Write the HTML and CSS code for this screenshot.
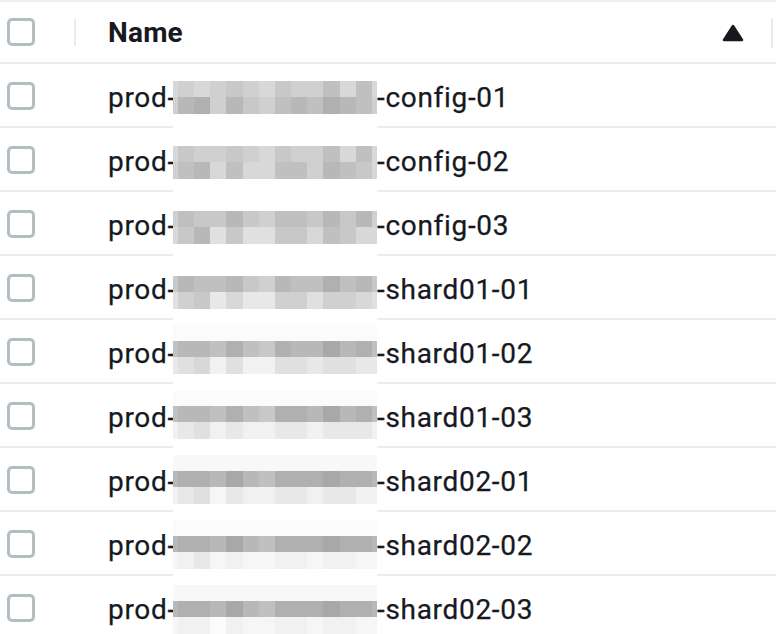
FILE: index.html
```html
<!DOCTYPE html>
<html lang="en">
<head>
<meta charset="utf-8">
<title>Instances</title>
<link rel="stylesheet" href="styles.css">
</head>
<body>
<div class="table">
  <div class="head">
    <div class="cbcell-h"><span class="cb"></span></div>
    <span class="divider"></span>
    <div class="hname">
      <span class="htext">Name</span>
      <svg class="sort" width="22" height="18" viewBox="0 0 22 18"><path d="M11 2 L20 16 H2 Z" fill="#16191f" stroke="#16191f" stroke-width="2.5" stroke-linejoin="round"/></svg>
    </div>
    <span class="divider tall"></span>
  </div>

  <div class="row"><div class="cbcell"><span class="cb"></span></div><div class="name">prod-<span class="gap"></span>-config-01</div></div>
  <div class="row"><div class="cbcell"><span class="cb"></span></div><div class="name">prod-<span class="gap"></span>-config-02</div></div>
  <div class="row"><div class="cbcell"><span class="cb"></span></div><div class="name">prod-<span class="gap"></span>-config-03</div></div>
  <div class="row"><div class="cbcell"><span class="cb"></span></div><div class="name">prod-<span class="gap"></span>-shard01-01</div></div>
  <div class="row"><div class="cbcell"><span class="cb"></span></div><div class="name">prod-<span class="gap"></span>-shard01-02</div></div>
  <div class="row"><div class="cbcell"><span class="cb"></span></div><div class="name">prod-<span class="gap"></span>-shard01-03</div></div>
  <div class="row"><div class="cbcell"><span class="cb"></span></div><div class="name">prod-<span class="gap"></span>-shard02-01</div></div>
  <div class="row"><div class="cbcell"><span class="cb"></span></div><div class="name">prod-<span class="gap"></span>-shard02-02</div></div>
  <div class="row"><div class="cbcell"><span class="cb"></span></div><div class="name">prod-<span class="gap"></span>-shard02-03</div></div>

  <div class="redact" aria-hidden="true">
    <div class="grp">
      <div class="br"></div>
      <div class="br"><i class="g3"></i><i class="g4"></i><i class="g3"></i><i class="g4"></i><i class="g5"></i><i class="g4"></i><i class="g3"></i><i class="g5"></i><i class="g4"></i><i class="g4"></i><i class="g6"></i><i class="g3"></i><i class="g6"></i><i class="g3"></i></div>
      <div class="br"><i class="g4"></i><i class="g7"></i><i class="g8"></i><i class="g4"></i><i class="g7"></i><i class="g5"></i><i class="g4"></i><i class="g6"></i><i class="g7"></i><i class="g6"></i><i class="g8"></i><i class="g7"></i><i class="g6"></i><i class="g4"></i></div>
      <div class="br"></div>
    </div>
    <div class="grp">
      <div class="br"></div>
      <div class="br"><i class="g3"></i><i class="g5"></i><i class="g4"></i><i class="g4"></i><i class="g5"></i><i class="g4"></i><i class="g3"></i><i class="g5"></i><i class="g4"></i><i class="g4"></i><i class="g6"></i><i class="g3"></i><i class="g6"></i><i class="g3"></i></div>
      <div class="br"><i class="g4"></i><i class="g6"></i><i class="g7"></i><i class="g3"></i><i class="g6"></i><i class="g3"></i><i class="g3"></i><i class="g6"></i><i class="g6"></i><i class="g4"></i><i class="g7"></i><i class="g6"></i><i class="g5"></i><i class="g3"></i></div>
      <div class="br"></div>
    </div>
    <div class="grp">
      <div class="br"></div>
      <div class="br"><i class="g4"></i><i class="g6"></i><i class="g5"></i><i class="g5"></i><i class="g7"></i><i class="g5"></i><i class="g4"></i><i class="g6"></i><i class="g6"></i><i class="g5"></i><i class="g7"></i><i class="g5"></i><i class="g7"></i><i class="g4"></i></div>
      <div class="br"><i class="g3"></i><i class="g5"></i><i class="g7"></i><i class="g2"></i><i class="g5"></i><i class="g2"></i><i class="g2"></i><i class="g5"></i><i class="g5"></i><i class="g3"></i><i class="g6"></i><i class="g5"></i><i class="g3"></i><i class="g3"></i></div>
      <div class="br"></div>
    </div>
    <div class="grp">
      <div class="br"></div>
      <div class="br"><i class="g5"></i><i class="g7"></i><i class="g6"></i><i class="g6"></i><i class="g7"></i><i class="g5"></i><i class="g4"></i><i class="g7"></i><i class="g6"></i><i class="g6"></i><i class="g8"></i><i class="g6"></i><i class="g7"></i><i class="g5"></i></div>
      <div class="br"><i class="g2"></i><i class="g4"></i><i class="g5"></i><i class="g1"></i><i class="g3"></i><i class="g1"></i><i class="g1"></i><i class="g4"></i><i class="g4"></i><i class="g2"></i><i class="g4"></i><i class="g4"></i><i class="g3"></i><i class="g2"></i></div>
      <div class="br"></div>
    </div>
    <div class="grp">
      <div class="br f1"></div>
      <div class="br"><i class="g6"></i><i class="g7"></i><i class="g7"></i><i class="g6"></i><i class="g8"></i><i class="g6"></i><i class="g5"></i><i class="g8"></i><i class="g7"></i><i class="g7"></i><i class="g9"></i><i class="g7"></i><i class="g8"></i><i class="g6"></i></div>
      <div class="br"><i class="g1"></i><i class="g2"></i><i class="g3"></i><i class="f3"></i><i class="g2"></i><i class="f3"></i><i class="f3"></i><i class="g2"></i><i class="g2"></i><i class="g1"></i><i class="g2"></i><i class="g2"></i><i class="g1"></i><i class="g1"></i></div>
      <div class="br"></div>
    </div>
    <div class="grp">
      <div class="br f1"></div>
      <div class="br"><i class="g6"></i><i class="g7"></i><i class="g7"></i><i class="g6"></i><i class="g8"></i><i class="g6"></i><i class="g5"></i><i class="g8"></i><i class="g8"></i><i class="g7"></i><i class="g9"></i><i class="g7"></i><i class="g8"></i><i class="g6"></i></div>
      <div class="br"><i class="f3"></i><i class="g1"></i><i class="g2"></i><i class="f3"></i><i class="g1"></i><i class="f3"></i><i class="f3"></i><i class="g1"></i><i class="g1"></i><i class="f3"></i><i class="g1"></i><i class="g1"></i><i class="g1"></i><i class="f3"></i></div>
      <div class="br"></div>
    </div>
    <div class="grp">
      <div class="br f2"></div>
      <div class="br"><i class="g7"></i><i class="g8"></i><i class="g8"></i><i class="g7"></i><i class="g9"></i><i class="g7"></i><i class="g6"></i><i class="g8"></i><i class="g8"></i><i class="g8"></i><i class="g9"></i><i class="g8"></i><i class="g8"></i><i class="g7"></i></div>
      <div class="br"><i class="f3"></i><i class="g1"></i><i class="g2"></i><i class="f2"></i><i class="g1"></i><i class="f3"></i><i class="f3"></i><i class="g1"></i><i class="g1"></i><i class="f3"></i><i class="g1"></i><i class="g1"></i><i class="f3"></i><i class="f3"></i></div>
      <div class="br"></div>
    </div>
    <div class="grp">
      <div class="br f1"></div>
      <div class="br"><i class="g7"></i><i class="g8"></i><i class="g8"></i><i class="g7"></i><i class="g9"></i><i class="g7"></i><i class="g6"></i><i class="g8"></i><i class="g8"></i><i class="g8"></i><i class="g9"></i><i class="g8"></i><i class="g8"></i><i class="g7"></i></div>
      <div class="br"><i class="f2"></i><i class="f3"></i><i class="g1"></i><i class="f2"></i><i class="f3"></i><i class="f2"></i><i class="f2"></i><i class="f3"></i><i class="f3"></i><i class="f2"></i><i class="f3"></i><i class="f3"></i><i class="f2"></i><i class="f2"></i></div>
      <div class="br"></div>
    </div>
    <div class="grp">
      <div class="br f2"></div>
      <div class="br"><i class="g7"></i><i class="g8"></i><i class="g8"></i><i class="g7"></i><i class="g9"></i><i class="g7"></i><i class="g6"></i><i class="g8"></i><i class="g8"></i><i class="g8"></i><i class="g9"></i><i class="g8"></i><i class="g8"></i><i class="g7"></i></div>
      <div class="br"><i class="f2"></i><i class="f3"></i><i class="f3"></i><i class="f1"></i><i class="f3"></i><i class="f2"></i><i class="f2"></i><i class="f3"></i><i class="f3"></i><i class="f2"></i><i class="f3"></i><i class="f3"></i><i class="f2"></i><i class="f2"></i></div>
      <div class="br"></div>
    </div>
  </div>
</div>
</body>
</html>
```

FILE: styles.css
```css
html, body {
  margin: 0;
  padding: 0;
  background: #ffffff;
  overflow: hidden;
}

body {
  font-family: Roboto, "Liberation Sans", Arial, sans-serif;
  font-size: 28px;
  line-height: 32px;
  letter-spacing: 0.7px;
  color: #16191f;
  -webkit-text-stroke: 0.25px #16191f;
}

.table {
  position: relative;
  width: 776px;
}

.head {
  display: flex;
  align-items: center;
  height: 60px;
  border-top: 2px solid #eceeef;
  border-bottom: 2px solid #eaeded;
  padding-right: 3px;
}

.cbcell-h {
  width: 74px;
  padding-left: 7px;
  box-sizing: border-box;
  display: flex;
  align-items: center;
}

.divider {
  width: 2px;
  height: 27px;
  background: #e9ebed;
  margin-top: 1px;
}

.divider.tall {
  height: 30px;
}

.hname {
  flex: 1;
  display: flex;
  align-items: center;
  padding-left: 32px;
  padding-top: 1px;
}

.htext {
  font-weight: 700;
  letter-spacing: 0.2px;
  -webkit-text-stroke: 0;
}

.sort {
  display: block;
  margin-left: auto;
  margin-right: 27px;
  margin-top: 1px;
}

.cb {
  display: block;
  width: 28px;
  height: 28px;
  box-sizing: border-box;
  border: 3px solid #b3bec2;
  border-radius: 5px;
  background: #ffffff;
}

.row {
  display: flex;
  height: 62px;
  border-bottom: 2px solid #eaeded;
}

.cbcell {
  width: 108px;
  padding-left: 7px;
  box-sizing: border-box;
  display: flex;
  align-items: center;
  padding-top: 2px;
}

.name {
  display: flex;
  align-items: center;
  padding-top: 5px;
  white-space: nowrap;
}

.gap {
  display: inline-block;
  width: 201px;
}

.redact {
  position: absolute;
  left: 173px;
  top: 64.75px;
  width: 204px;
}

.grp {
  height: 65px;
}

.br {
  height: 16.25px;
  background: #ffffff;
  display: grid;
  grid-template-columns: 5px repeat(12, 16.17px) 1fr;
}

.br i {
  display: block;
}

.br.f1 { background: #fbfbfb; }
.br.f2 { background: #f8f8f8; }

.f1 { background: #fbfbfb; }
.f2 { background: #f6f6f6; }
.f3 { background: #f1f1f1; }
.g1 { background: #e8e8e8; }
.g2 { background: #e0e0e0; }
.g3 { background: #d8d8d8; }
.g4 { background: #d0d0d0; }
.g5 { background: #c8c8c8; }
.g6 { background: #c0c0c0; }
.g7 { background: #b8b8b8; }
.g8 { background: #b0b0b0; }
.g9 { background: #a8a8a8; }
```
